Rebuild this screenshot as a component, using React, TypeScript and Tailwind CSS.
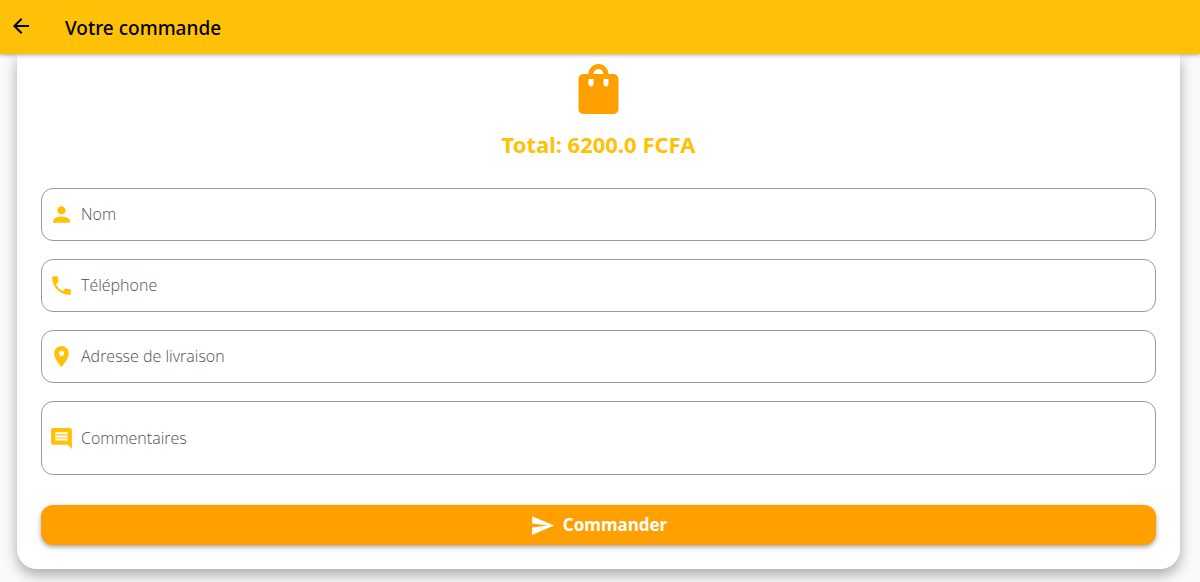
import type { ReactNode } from "react";

const ICONS = {
  back: "M20 11H7.83l5.59-5.59L12 4l-8 8 8 8 1.41-1.41L7.83 13H20v-2z",
  bag: "M18 6h-2c0-2.21-1.79-4-4-4S8 3.79 8 6H6c-1.1 0-2 .9-2 2v12c0 1.1.9 2 2 2h12c1.1 0 2-.9 2-2V8c0-1.1-.9-2-2-2zm-8 4c0 .55-.45 1-1 1s-1-.45-1-1V8h2v2zm2-6c1.1 0 2 .9 2 2h-4c0-1.1.9-2 2-2zm4 6c0 .55-.45 1-1 1s-1-.45-1-1V8h2v2z",
  person:
    "M12 12c2.21 0 4-1.79 4-4s-1.79-4-4-4-4 1.79-4 4 1.79 4 4 4zm0 2c-2.67 0-8 1.34-8 4v2h16v-2c0-2.66-5.33-4-8-4z",
  phone:
    "M6.62 10.79c1.44 2.83 3.76 5.14 6.59 6.59l2.2-2.2c.27-.27.67-.36 1.02-.24 1.12.37 2.33.57 3.57.57.55 0 1 .45 1 1V20c0 .55-.45 1-1 1-9.39 0-17-7.61-17-17 0-.55.45-1 1-1h3.5c.55 0 1 .45 1 1 0 1.25.2 2.45.57 3.57.11.35.03.74-.25 1.02l-2.2 2.2z",
  place:
    "M12 2C8.13 2 5 5.13 5 9c0 5.25 7 13 7 13s7-7.75 7-13c0-3.87-3.13-7-7-7zm0 9.5c-1.38 0-2.5-1.12-2.5-2.5s1.12-2.5 2.5-2.5 2.5 1.12 2.5 2.5-1.12 2.5-2.5 2.5z",
  comment:
    "M21.99 4c0-1.1-.89-2-1.99-2H4c-1.1 0-2 .9-2 2v12c0 1.1.9 2 2 2h14l4 4-.01-18zM18 14H6v-2h12v2zm0-3H6V9h12v2zm0-3H6V6h12v2z",
  send: "M2.01 21L23 12 2.01 3 2 10l15 2-15 2z",
};

function Icon({ name, className }: { name: keyof typeof ICONS; className: string }) {
  return (
    <svg viewBox="0 0 24 24" fill="currentColor" aria-hidden="true" className={`shrink-0 ${className}`}>
      <path d={ICONS[name]} />
    </svg>
  );
}

function Field({
  icon,
  label,
  height,
  children,
}: {
  icon: keyof typeof ICONS;
  label: string;
  height: string;
  children: ReactNode;
}) {
  return (
    <label
      className={`flex cursor-text items-center gap-[7px] rounded-xl border border-[#9a9a9a] px-[7px] focus-within:border-[#ffa000] ${height}`}
    >
      <Icon name={icon} className="size-[25px] text-[#ffc107]" />
      <span className="pb-px font-['Open_Sans','Noto_Sans',sans-serif] text-base font-light text-[#505050]">
        {label}
      </span>
      {children}
    </label>
  );
}

const control = "min-w-0 flex-1 resize-none bg-transparent text-base outline-none";

export default function App() {
  return (
    <div className="flex min-h-screen flex-col bg-[#fafafa] font-['Noto_Sans',sans-serif]">
      <header className="relative z-10 flex h-[54px] items-center gap-8 bg-[#ffc107] px-[9px] text-black shadow-[0_1px_4px_rgba(0,0,0,0.35)]">
        <button type="button" aria-label="Retour" className="cursor-pointer pb-0.5">
          <Icon name="back" className="size-6" />
        </button>
        <h1 className="pt-0.5 text-[19px] font-medium">Votre commande</h1>
      </header>

      <main className="pr-5 pb-[13px] pl-[17px]">
        <form
          onSubmit={(event) => event.preventDefault()}
          className="flex flex-col rounded-b-[20px] bg-white px-6 pt-[5px] pb-6 shadow-[0_6px_14px_rgba(0,0,0,0.32)]"
        >
          <Icon name="bag" className="h-15 w-[61px] self-center text-[#ffa000]" />
          <p className="mt-[9px] text-center text-[22px] leading-8 font-bold text-[#ffc107]">
            Total: 6200.0 FCFA
          </p>

          <div className="mt-7 flex flex-col gap-[18px]">
            <Field icon="person" label="Nom" height="h-[53px]">
              <input type="text" name="nom" className={control} />
            </Field>
            <Field icon="phone" label="Téléphone" height="h-[53px]">
              <input type="tel" name="telephone" className={control} />
            </Field>
            <Field icon="place" label="Adresse de livraison" height="h-[53px]">
              <input type="text" name="adresse" className={control} />
            </Field>
            <Field icon="comment" label="Commentaires" height="h-[74px]">
              <textarea name="commentaires" rows={2} className={control} />
            </Field>
          </div>

          <button
            type="submit"
            className="mt-[30px] flex h-10 cursor-pointer items-center justify-center gap-2 rounded-xl bg-[#ffa000] text-[17px] font-bold text-white shadow-[0_2px_5px_rgba(0,0,0,0.36)]"
          >
            <Icon name="send" className="size-[25px]" />
            Commander
          </button>
        </form>
      </main>
    </div>
  );
}
